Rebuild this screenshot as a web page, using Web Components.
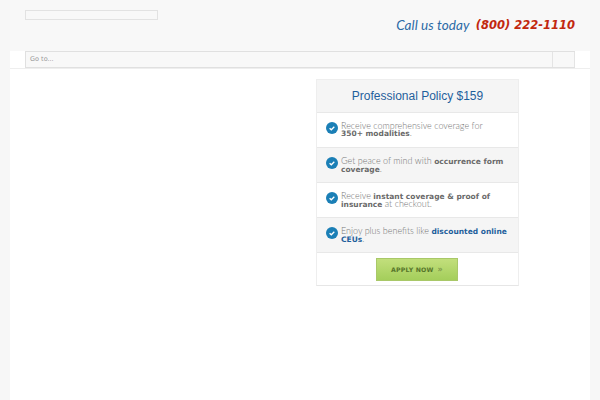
<!DOCTYPE html>
<html>
<head>
<meta charset="utf-8">
<style>
    html, body { margin: 0; height: 400px; overflow: hidden; background: #f7f7f7; }
    body { font-family: "DejaVu Sans", sans-serif; }
</style>
</head>
<body>
<site-page>
    <site-header slot="header"></site-header>
    <site-nav slot="nav"></site-nav>
    <policy-card slot="main" title="Professional Policy $159">
        <policy-item>Receive comprehensive coverage for<br><b>350+ modalities</b>.</policy-item>
        <policy-item shaded>Get peace of mind with <b>occurrence form coverage</b>.</policy-item>
        <policy-item>Receive <b>instant coverage &amp; proof of insurance</b> at checkout.</policy-item>
        <policy-item shaded>Enjoy plus benefits like <b class="link">discounted online CEUs</b>.</policy-item>
    </policy-card>
</site-page>
<script>
// page frame: white column with a lighter strip on each side
class SitePage extends HTMLElement {
    constructor() {
        super();
        this.attachShadow({ mode: 'open' });
        this.shadowRoot.innerHTML = `
            <style>
                :host { display: block; margin: 0 10px; height: 400px; background: #fff; }
                main { display: flex; justify-content: flex-end; padding: 10px 71px 0 0; }
            </style>
            <slot name="header"></slot>
            <slot name="nav"></slot>
            <main><slot name="main"></slot></main>`;
    }
}

// logo placeholder and phone number
class SiteHeader extends HTMLElement {
    constructor() {
        super();
        this.attachShadow({ mode: 'open' });
        this.shadowRoot.innerHTML = `
            <style>
                :host { display: flex; justify-content: space-between; height: 51px; background: #f8f8f8; padding: 0 15px; box-sizing: border-box; }
                .logo { width: 131px; height: 8px; margin-top: 10px; border: 1px solid #e2e2e2; }
                .phone { display: flex; gap: 6px; margin-top: 17px; font: italic 400 13.5px/17px Lato, sans-serif; letter-spacing: .1px; white-space: nowrap; color: #2b6aa6; }
                .phone b { font: italic bold 11.5px/17px "DejaVu Sans", sans-serif; color: #c2280f; letter-spacing: 0; }
            </style>
            <div class="logo"></div>
            <div class="phone"><span>Call us today</span><b>(800) 222-1110</b></div>`;
    }
}

// select-style menu bar
class SiteNav extends HTMLElement {
    constructor() {
        super();
        this.attachShadow({ mode: 'open' });
        this.shadowRoot.innerHTML = `
            <style>
                :host { display: block; padding: 0 15px; border-bottom: 1px solid #eee; }
                .bar { display: flex; height: 15px; background: #f8f8f8; border: 1px solid #e0e0e0; border-right: none; }
                .label { flex: 1; font-size: 6.5px; line-height: 15px; padding-left: 4px; color: #999; }
                .arrow { width: 21px; border: solid #e4e4e4; border-width: 0 1px; }
            </style>
            <div class="bar">
                <div class="label">Go to...</div>
                <div class="arrow"></div>
            </div>`;
    }
}

class PolicyCard extends HTMLElement {
    constructor() {
        super();
        this.attachShadow({ mode: 'open' });
        this.shadowRoot.innerHTML = `
            <style>
                :host { display: block; width: 201px; border: 1px solid #eee; border-bottom-color: #e6e6e6; background: #fff; }
                h2 { margin: 0; height: 32px; font: normal 12px/33px "Liberation Sans", sans-serif; text-align: center; color: #1f5f9c; background: #f5f5f5; border-bottom: 1px solid #e8e8e8; }
                footer { display: flex; justify-content: center; padding: 5px 1px 4px 0; }
                a { display: flex; justify-content: center; align-items: baseline; gap: 4px; width: 80px; height: 21px; font-size: 6.2px; font-weight: bold; line-height: 21px; letter-spacing: .2px; color: #56752a; background: linear-gradient(#c2df7c, #a4ce5b); border: 1px solid #a9c868; }
                i { font-style: normal; font-size: 8px; color: #7f9a4c; }
            </style>
            <h2></h2>
            <slot></slot>
            <footer><a>APPLY NOW <i>»</i></a></footer>`;
        this.shadowRoot.querySelector('h2').textContent = this.getAttribute('title');
    }
}

class PolicyItem extends HTMLElement {
    constructor() {
        super();
        this.attachShadow({ mode: 'open' });
        this.shadowRoot.innerHTML = `
            <style>
                :host { display: flex; align-items: flex-start; gap: 3px; height: 34px; padding-left: 9px; border-bottom: 1px solid #e8e8e8; background: #fff; }
                :host([shaded]) { background: #f5f5f5; }
                svg { flex: none; width: 12px; height: 12px; margin-top: 9px; }
                div { width: 170px; margin-top: 10px; font: 300 9px/6.6px Lato, sans-serif; color: #777; }
                ::slotted(b) { font-family: "DejaVu Sans", sans-serif; font-size: 7.5px; font-weight: bold; color: #6a6a6a; }
                ::slotted(b.link) { color: #1f5f9c; }
            </style>
            <svg viewBox="0 0 12 12"><circle cx="6" cy="6" r="6" fill="#1b7fb6"/><path d="M3.6 6.2l1.7 1.6 3-3" fill="none" stroke="#fff" stroke-width="1.3"/></svg>
            <div><slot></slot></div>`;
    }
}

customElements.define('site-page', SitePage);
customElements.define('site-header', SiteHeader);
customElements.define('site-nav', SiteNav);
customElements.define('policy-card', PolicyCard);
customElements.define('policy-item', PolicyItem);
</script>
</body>
</html>
